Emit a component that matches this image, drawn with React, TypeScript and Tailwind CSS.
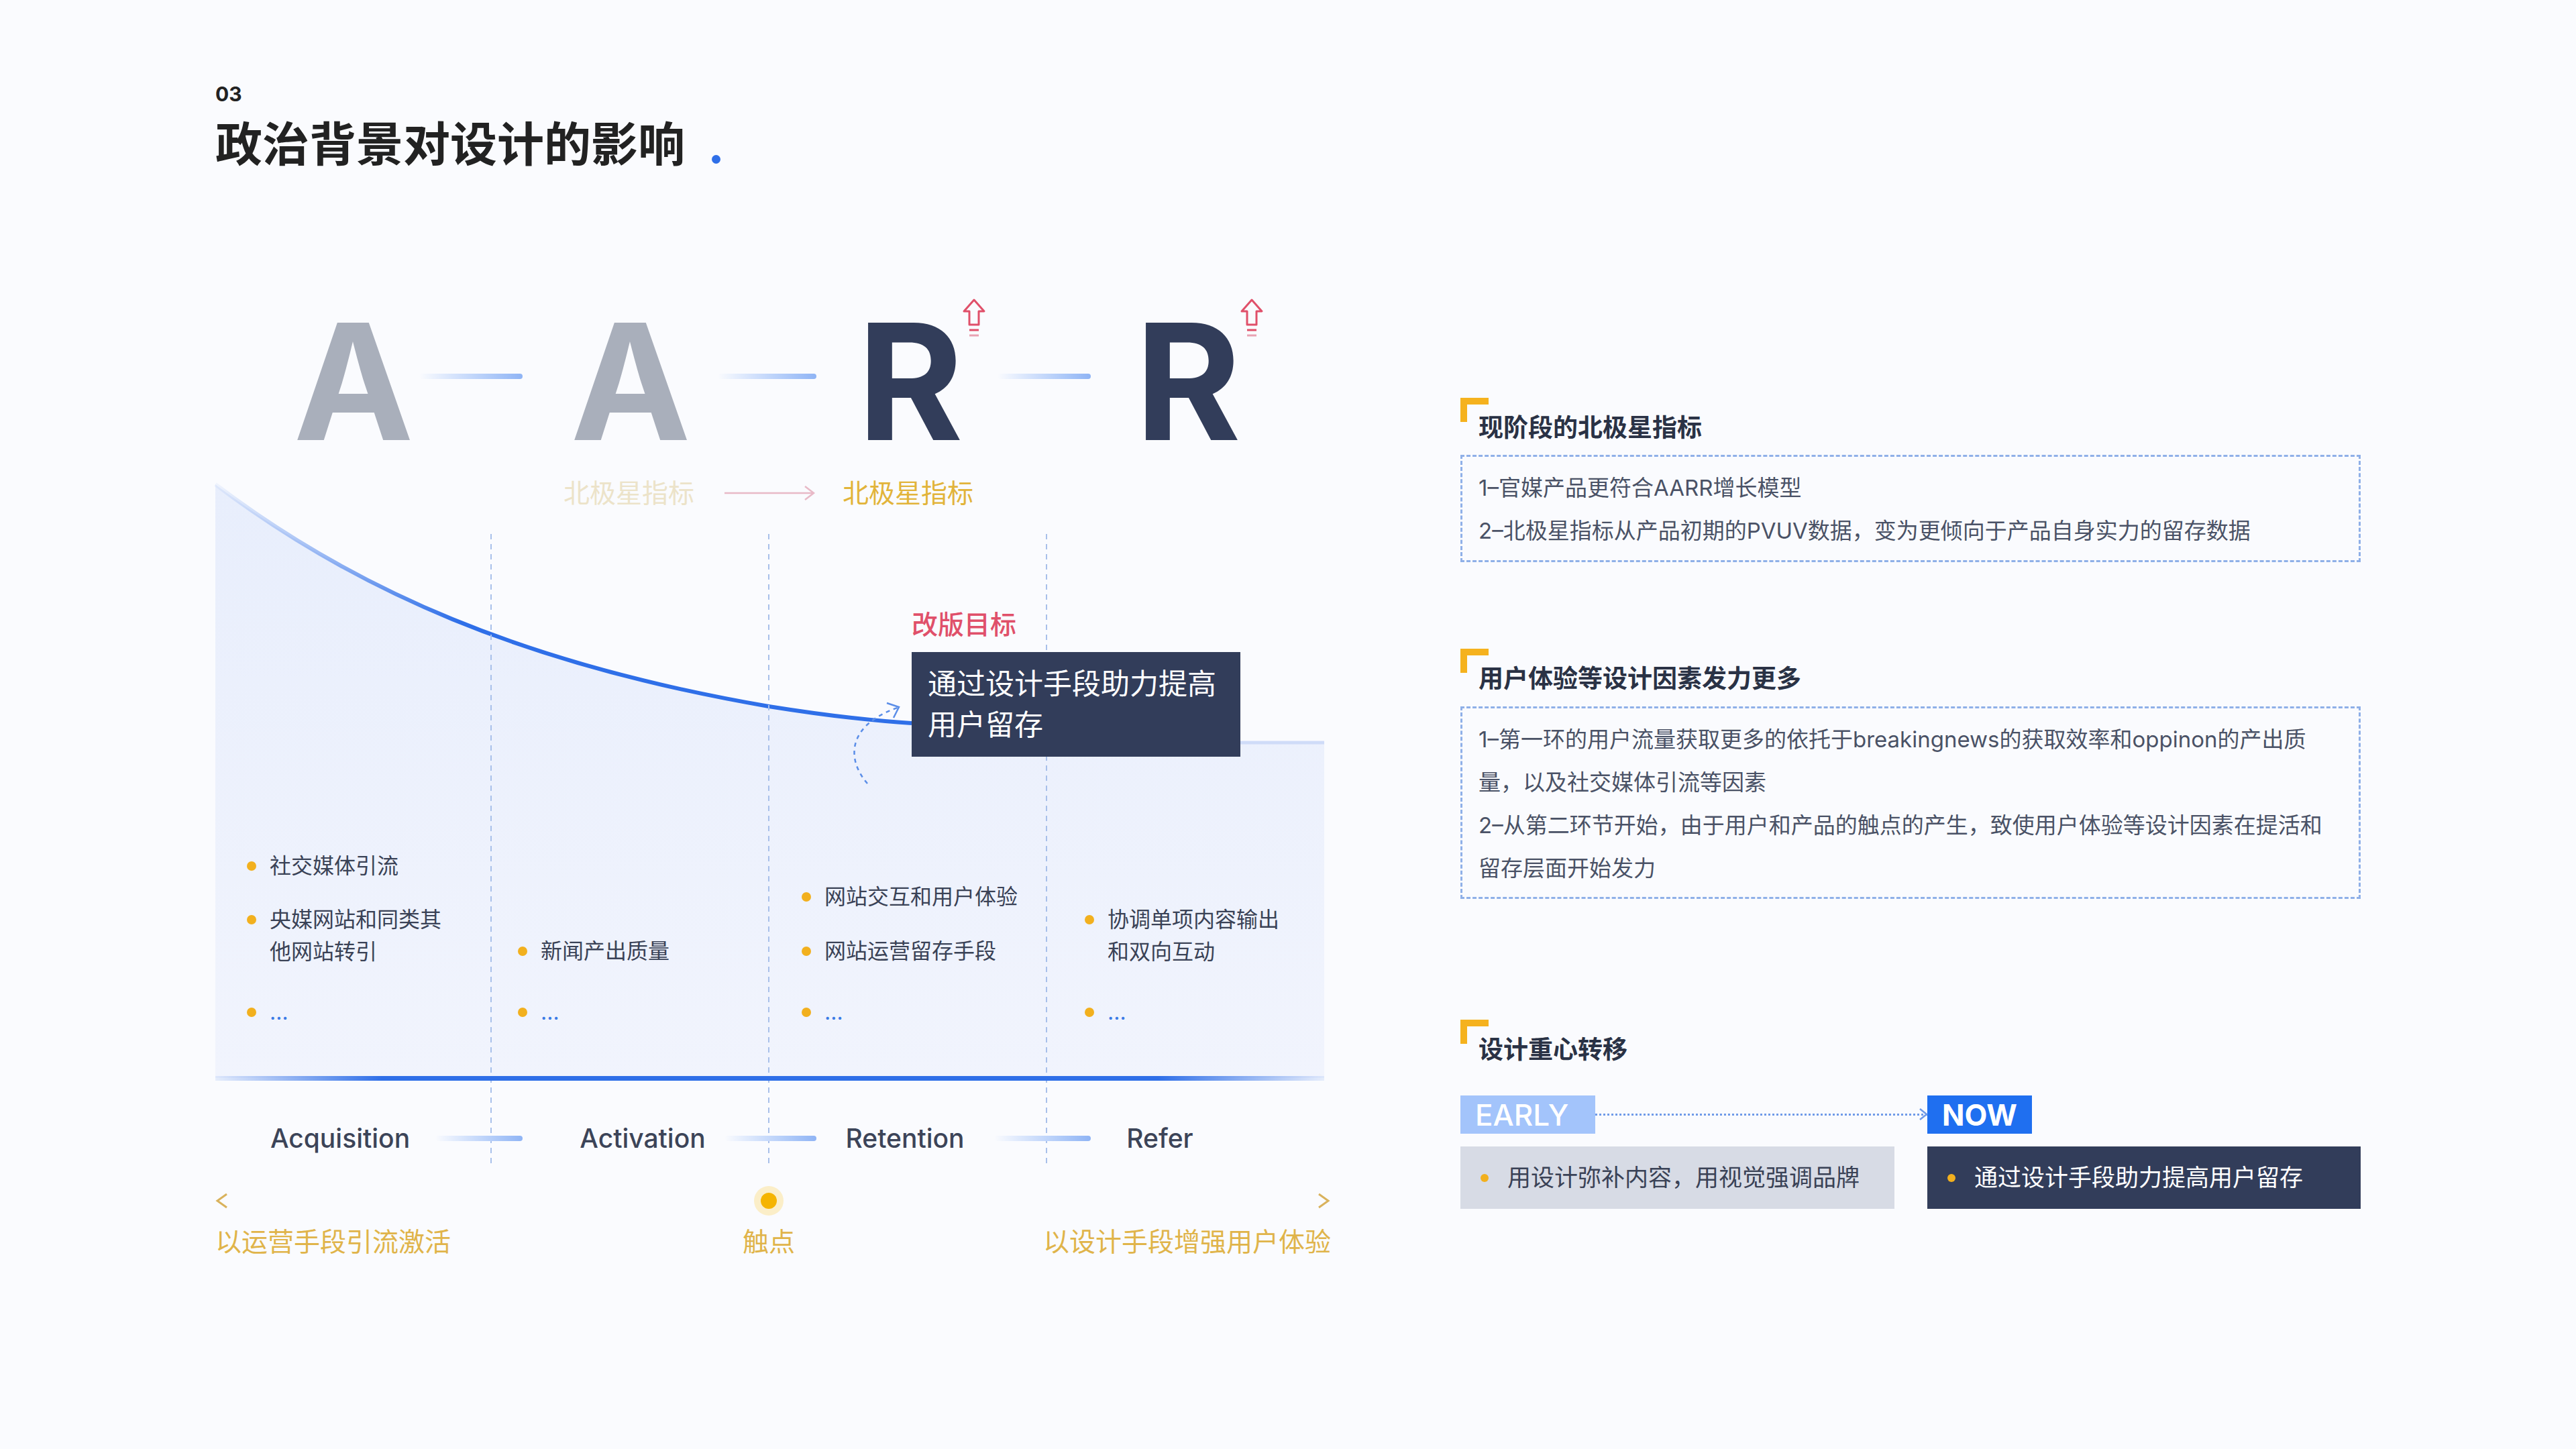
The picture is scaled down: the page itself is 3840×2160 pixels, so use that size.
import React from "react";

const F = { fontFamily: "Inter, 'Noto Sans CJK SC', sans-serif" };

function UpArrow({ x }: { x: number }) {
  return (
    <svg className="absolute" style={{ left: x - 20, top: 44 }} width="40" height="62" viewBox="0 0 40 62">
      <path d="M20 3 L35 20 L27 20 L27 40 L13 40 L13 20 L5 20 Z" fill="none" stroke="#e0506a" strokeWidth="3" strokeLinejoin="round" />
      <line x1="13" y1="48" x2="27" y2="48" stroke="#e0506a" strokeWidth="3" />
      <line x1="13" y1="56" x2="27" y2="56" stroke="#e9a2b2" strokeWidth="3" />
    </svg>
  );
}

function Seg({ x1, x2, y }: { x1: number; x2: number; y: number }) {
  return (
    <div
      className="absolute h-[8px] rounded-full bg-gradient-to-r from-[#fafbfe] to-[#8fb4f5]"
      style={{ left: x1, width: x2 - x1, top: y - 4 }}
    />
  );
}

function Bullet({ x, y, children, dots }: { x: number; y: number; children?: React.ReactNode; dots?: boolean }) {
  return (
    <div className="absolute flex items-start gap-[20px]" style={{ left: x - 7, top: y - 24 }}>
      <span className="mt-[17px] h-[14px] w-[14px] shrink-0 rounded-full bg-[#f2b01e]" />
      {dots ? (
        <span className="text-[32px] leading-[48px] tracking-[4px] text-[#3b7be6]">…</span>
      ) : (
        <span className="text-[32px] leading-[48px] text-[#3a4256]">{children}</span>
      )}
    </div>
  );
}

function Letter({ c, x, color }: { c: string; x: number; color: string }) {
  return (
    <div
      className="absolute w-[300px] text-center text-[240px] font-bold leading-none"
      style={{ left: x - 150, top: 49, color, fontFamily: "Inter, sans-serif" }}
    >
      {c}
    </div>
  );
}

function Heading({ children }: { children: React.ReactNode }) {
  return (
    <div className="relative h-[72px] pl-[27px] pt-[18px]">
      <div className="absolute left-0 top-0 h-[10px] w-[42px] bg-[#f5b21e]" />
      <div className="absolute left-0 top-0 h-[36px] w-[10px] bg-[#f5b21e]" />
      <div className="text-[37px] font-bold leading-[54px] text-[#2a3245]">{children}</div>
    </div>
  );
}

export default function App() {
  return (
    <div className="flex h-[2160px] w-[3840px] overflow-hidden bg-[#fafbfe]" style={F}>
      {/* Left */}
      <div className="w-[2177px] shrink-0">
        <div className="h-[400px] pl-[321px] pt-[124px]">
          <div className="text-[30px] font-bold leading-[32px] text-[#222]">03</div>
          <div className="mt-[20px] flex items-end">
            <span className="text-[70px] font-bold leading-[80px] text-[#222]">政治背景对设计的影响</span>
            <span className="mb-[12px] ml-[40px] h-[13px] w-[13px] rounded-full bg-[#2f6fe8]" />
          </div>
        </div>
        <div className="relative ml-[280px] h-[1550px] w-[1800px]">
          <svg className="absolute left-0 top-0" width="1800" height="1550" viewBox="0 0 1800 1550">
            <defs>
              <linearGradient id="area" x1="0" y1="0" x2="0" y2="1">
                <stop offset="0" stopColor="#e8eefc" />
                <stop offset="1" stopColor="#f1f4fd" />
              </linearGradient>
              <linearGradient id="base" x1="0" y1="0" x2="1" y2="0">
                <stop offset="0" stopColor="#2f6fe8" stopOpacity="0.1" />
                <stop offset="0.15" stopColor="#2f6fe8" />
                <stop offset="0.85" stopColor="#2f6fe8" />
                <stop offset="1" stopColor="#2f6fe8" stopOpacity="0.1" />
              </linearGradient>
              <linearGradient id="curve" x1="0" y1="0" x2="1" y2="0">
                <stop offset="0" stopColor="#2f6fe8" stopOpacity="0.05" />
                <stop offset="0.35" stopColor="#2f6fe8" />
                <stop offset="1" stopColor="#2f6fe8" />
              </linearGradient>
              <linearGradient id="gold" x1="0" y1="0" x2="1" y2="0">
                <stop offset="0" stopColor="#d9b25c" />
                <stop offset="0.45" stopColor="#f0dfe2" />
                <stop offset="0.55" stopColor="#f0dfe2" />
                <stop offset="1" stopColor="#d9b25c" />
              </linearGradient>
            </defs>
            <path
              d="M41 322 C 250 480 500 590 866 653 C 960 668 1030 675 1079 678 L 1569 707 L 1694 707 L 1694 1207 L 41 1207 Z"
              fill="url(#area)"
            />
            <path d="M41 322 C 250 480 500 590 866 653 C 960 668 1030 675 1079 678" fill="none" stroke="url(#curve)" strokeWidth="6" />
            <line x1="1569" y1="707" x2="1694" y2="707" stroke="#cfdcf8" strokeWidth="5" />
            {[452, 866, 1280].map((x) => (
              <line key={x} x1={x} y1="396" x2={x} y2="1339" stroke="#a8c0ea" strokeWidth="2" strokeDasharray="8 7" />
            ))}
            <rect x="41" y="1204" width="1653" height="7" fill="url(#base)" />
            <path d="M1013 768 C 980 730 985 680 1058 655" fill="none" stroke="#5b8ee8" strokeWidth="2.5" strokeDasharray="6 6" />
            <path d="M1042 648 L1060 654 L1052 670" fill="none" stroke="#5b8ee8" strokeWidth="2.5" />
            <line x1="800" y1="335" x2="932" y2="335" stroke="#e8b9c7" strokeWidth="2.5" />
            <path d="M920 325 L933 335 L920 345" fill="none" stroke="#e8b9c7" strokeWidth="2.5" />
            <line x1="44" y1="1390" x2="1700" y2="1390" stroke="url(#gold)" strokeWidth="3" />
            <path d="M58 1380 L44 1390 L58 1400" fill="none" stroke="#d9b25c" strokeWidth="3" />
            <path d="M1686 1380 L1700 1390 L1686 1400" fill="none" stroke="#d9b25c" strokeWidth="3" />
            <circle cx="866" cy="1390" r="22" fill="#fbeec8" />
            <circle cx="866" cy="1390" r="12" fill="#f5b400" />
          </svg>

          <Letter c="A" x={247} color="#a9afbb" />
          <Letter c="A" x={660} color="#a9afbb" />
          <Letter c="R" x={1077} color="#323d5a" />
          <Letter c="R" x={1491} color="#323d5a" />
          <Seg x1={345} x2={499} y={161} />
          <Seg x1={790} x2={937} y={161} />
          <Seg x1={1207} x2={1346} y={161} />
          <UpArrow x={1172} />
          <UpArrow x={1586} />

          <div className="absolute text-[39px] leading-[50px] text-[#ece3c9]" style={{ left: 560, top: 310 }}>北极星指标</div>
          <div className="absolute text-[39px] leading-[50px] text-[#e2b43a]" style={{ left: 976, top: 310 }}>北极星指标</div>

          <div className="absolute text-[39px] font-medium leading-[50px] text-[#e0506a]" style={{ left: 1079, top: 506 }}>改版目标</div>
          <div className="absolute w-[490px] bg-[#323d5a] px-[24px] py-[17px] text-[43px] leading-[61px] text-white" style={{ left: 1079, top: 572 }}>
            通过设计手段助力提高用户留存
          </div>

          <Bullet x={95} y={891}>社交媒体引流</Bullet>
          <Bullet x={95} y={971}>
            央媒网站和同类其
            <br />
            他网站转引
          </Bullet>
          <Bullet x={95} y={1109} dots />
          <Bullet x={499} y={1018}>新闻产出质量</Bullet>
          <Bullet x={499} y={1109} dots />
          <Bullet x={922} y={937}>网站交互和用户体验</Bullet>
          <Bullet x={922} y={1018}>网站运营留存手段</Bullet>
          <Bullet x={922} y={1109} dots />
          <Bullet x={1344} y={971}>
            协调单项内容输出
            <br />
            和双向互动
          </Bullet>
          <Bullet x={1344} y={1109} dots />

          {[
            ["Acquisition", 227],
            ["Activation", 678],
            ["Retention", 1069],
            ["Refer", 1449],
          ].map(([t, x]) => (
            <div key={t as string} className="absolute w-[300px] text-center text-[39px] font-medium leading-[50px] text-[#3c4458]" style={{ left: (x as number) - 150, top: 1272 }}>
              {t}
            </div>
          ))}
          <Seg x1={369} x2={499} y={1297} />
          <Seg x1={800} x2={937} y={1297} />
          <Seg x1={1202} x2={1346} y={1297} />

          <div className="absolute text-[39px] leading-[50px] text-[#e0b44a]" style={{ left: 41, top: 1426 }}>以运营手段引流激活</div>
          <div className="absolute w-[200px] text-center text-[39px] leading-[50px] text-[#e0b44a]" style={{ left: 766, top: 1426 }}>触点</div>
          <div className="absolute w-[600px] text-right text-[39px] leading-[50px] text-[#e0b44a]" style={{ left: 1104, top: 1426 }}>以设计手段增强用户体验</div>
        </div>
      </div>

      {/* Right */}
      <div className="flex w-[1342px] shrink-0 flex-col pt-[593px]">
        <Heading>现阶段的北极星指标</Heading>
        <div className="mt-[13px] h-[160px] border-[3px] border-dashed border-[#8fb0e8] px-[24px] py-[14px] text-[33px] leading-[64px] text-[#4a5266]">
          <div>1–官媒产品更符合AARR增长模型</div>
          <div>2–北极星指标从产品初期的PVUV数据，变为更倾向于产品自身实力的留存数据</div>
        </div>
        <div className="mt-[129px]">
          <Heading>用户体验等设计因素发力更多</Heading>
        </div>
        <div className="mt-[14px] h-[287px] border-[3px] border-dashed border-[#8fb0e8] px-[24px] py-[14px] text-[33px] leading-[64px] text-[#4a5266]">
          <div>1–第一环的用户流量获取更多的依托于breakingnews的获取效率和oppinon的产出质量，以及社交媒体引流等因素</div>
          <div>2–从第二环节开始，由于用户和产品的触点的产生，致使用户体验等设计因素在提活和留存层面开始发力</div>
        </div>
        <div className="mt-[180px]">
          <Heading>设计重心转移</Heading>
        </div>
        <div className="mt-[41px] flex items-center">
          <div className="flex h-[57px] w-[201px] items-center bg-[#a3c4fb] pl-[22px] text-[44px] font-medium text-white">EARLY</div>
          <div className="relative h-[3px] flex-none w-[495px] border-t-[3px] border-dotted border-[#6f9ae8]">
            <svg className="absolute right-[-2px] top-[-13px]" width="16" height="22" viewBox="0 0 16 22">
              <path d="M3 3 L13 11 L3 19" fill="none" stroke="#6f9ae8" strokeWidth="2.5" />
            </svg>
          </div>
          <div className="flex h-[57px] w-[156px] items-center bg-[#1f6ff0] pl-[22px] text-[44px] font-bold text-white">NOW</div>
        </div>
        <div className="mt-[19px] flex gap-[49px]">
          <div className="flex h-[93px] w-[647px] items-center gap-[28px] bg-[#d7dbe5] pl-[30px] text-[35px] text-[#3a4256]">
            <span className="h-[12px] w-[12px] rounded-full bg-[#f2b01e]" />
            用设计弥补内容，用视觉强调品牌
          </div>
          <div className="flex h-[93px] w-[646px] items-center gap-[28px] bg-[#323d5a] pl-[30px] text-[35px] text-white">
            <span className="h-[12px] w-[12px] rounded-full bg-[#f2b01e]" />
            通过设计手段助力提高用户留存
          </div>
        </div>
      </div>
    </div>
  );
}
